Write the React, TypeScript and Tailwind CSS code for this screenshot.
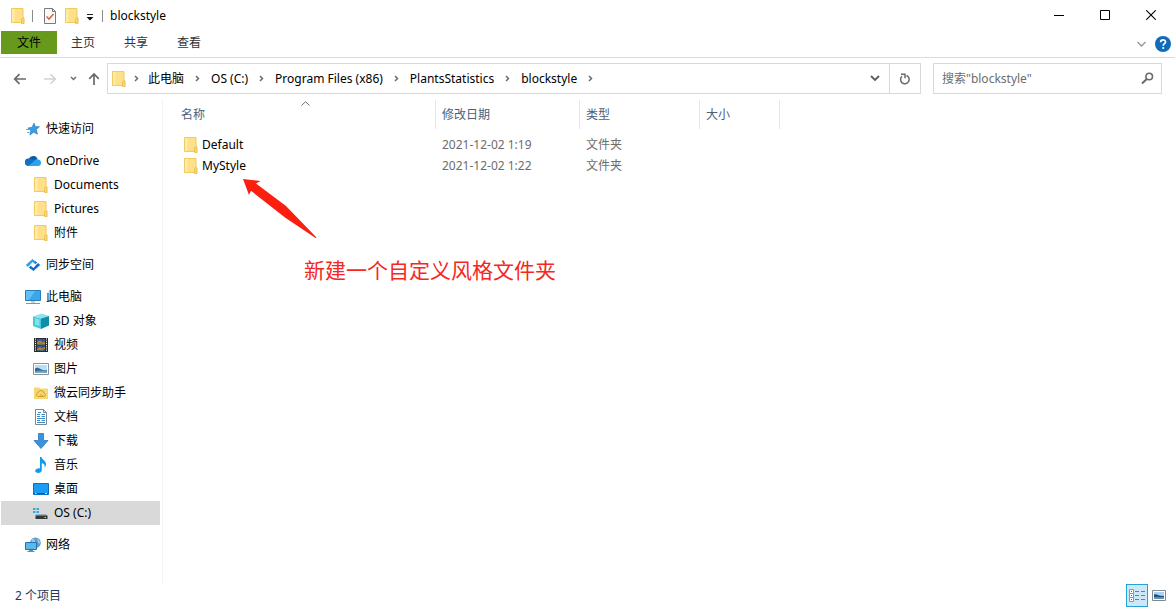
import type { ReactNode } from 'react';

function Folder() {
  return (
    <svg width="14" height="16" viewBox="0 0 14 16" aria-hidden="true">
      <path d="M.5.5h11.500v14H.5z" fill="#fee08a" stroke="#f0cb62" />
      <path d="M1 1h2.500v13H1z" fill="#ffeba6" />
      <path d="M10.500 15.500V11l1.500-1.500h.5l.6.800v5.200z" fill="#fad76c" stroke="#e3b647" strokeWidth=".7" />
    </svg>
  );
}

function Chevron({ d, w, h, color = '#6b6b6b', stroke = 1.5 }: { d: string; w: number; h: number; color?: string; stroke?: number }) {
  return (
    <svg width={w} height={h} viewBox={`0 0 ${w} ${h}`} fill="none" stroke={color} strokeWidth={stroke} aria-hidden="true">
      <path d={d} />
    </svg>
  );
}

function Star() {
  return (
    <svg width="16" height="16" viewBox="0 0 16 16" aria-hidden="true">
      <path d="M9 2l1.300 3.600 4.200.1-3.200 2.800 1.200 4.700-3.900-2-3.700 3 .9-4.600L2.800 7.100l4.300-.9z" fill="#3a9be0" stroke="#2079c0" strokeWidth=".6" />
      <path d="M1 8.500h3M2 11.500h2.500" stroke="#5aaee8" />
    </svg>
  );
}

function Cloud() {
  return (
    <svg width="16" height="16" viewBox="0 0 16 16" aria-hidden="true">
      <path d="M4 5.500A4.600 4.600 0 0 1 12.600 6.500L8 10 3 12.500a3.500 3.500 0 0 1 1-7z" fill="#0a5ca8" />
      <path d="M3.600 5.900c2-.3 3.300.5 8.400 3.800L3.400 12.900a3.500 3.500 0 0 1 .2-7z" fill="#1173c8" />
      <path d="M9 8c1-1.500 2.300-1.800 3.600-1.600A3.300 3.300 0 0 1 12.800 13H3.300c1.800-1.500 3.400-3 5.700-5z" fill="#2aa4ea" />
    </svg>
  );
}

function Sync() {
  return (
    <svg width="16" height="16" viewBox="0 0 16 16" aria-hidden="true">
      <path d="M7.500 2L12 5.500 10 7 7.500 5 5 8l-2 2L.800 8z" fill="#2fa3f2" />
      <path d="M8.500 14L4 10.500 6 9l2.500 2L11 8l2-2 2.200 2z" fill="#0c6fd1" />
      <path d="M10.500 4.200L12 5.500 10 7M5.500 11.800L4 10.500 6 9" fill="#0c5eb8" />
    </svg>
  );
}

function Monitor() {
  return (
    <svg width="16" height="16" viewBox="0 0 16 16" aria-hidden="true">
      <path d="M.5 1.500h15v10H.5z" fill="#38a8ee" stroke="#2c7db5" />
      <path d="M1 2h9L4 11H1z" fill="#62c0f7" />
      <path d="M6 12h4v2H6z" fill="#c3d0d8" />
      <path d="M1 14.500h14" stroke="#8496a1" />
    </svg>
  );
}

function Cube() {
  return (
    <svg width="16" height="16" viewBox="0 0 16 16" aria-hidden="true">
      <path d="M0 3.500L8.500.500 16 3 8 5.500z" fill="#8fe4ec" />
      <path d="M0 3.500l8 2V16l-8-3z" fill="#48c9da" />
      <path d="M8 5.500L16 3v9.500L8 16z" fill="#0f8fa8" />
      <path d="M2 5.200l4.500 1.300v6.500L2 11.500z" fill="#7fe3ec" />
    </svg>
  );
}

function Film() {
  return (
    <svg width="16" height="16" viewBox="0 0 16 16" aria-hidden="true">
      <path d="M1 1h14v14H1z" fill="#2b2b2d" />
      <path d="M4 2h8v5.500H4z" fill="#3458a8" />
      <path d="M4 8.500h8V14H4z" fill="#34559b" />
      <path d="M4 5l3-1.500 3 2 2-1v3H4zM4 12l3-2 2 1.500 3-1.500v2l-4 1H4z" fill="#b8832f" />
      <path d="M6 5.500h3v2H6zM7 12h3v1.500H7z" fill="#5c9a3b" />
      <path d="M2.500 1.500v13M13.500 1.500v13" stroke="#f2f2f2" strokeDasharray="1.200 1" />
    </svg>
  );
}

function Picture() {
  return (
    <svg width="16" height="16" viewBox="0 0 16 16" aria-hidden="true">
      <path d="M.5 2.500h15v11H.5z" fill="#fff" stroke="#8a9399" />
      <path d="M2 4h12v8H2z" fill="#b9def3" />
      <path d="M2 7.500c2-1.500 4-.5 6 .8s4 1.200 6 1V12H2z" fill="#35699a" />
      <path d="M2 10.500c4-1.200 8-.8 12 0V12H2z" fill="#79a9b8" />
    </svg>
  );
}

function CloudFolder() {
  return (
    <svg width="16" height="16" viewBox="0 0 16 16" aria-hidden="true">
      <path d="M1 2.500h5l1.500 1H15v10.500H1z" fill="#f6d873" />
      <path d="M4.700 11.500a1.800 1.800 0 0 1 .2-3.500 3.100 3.100 0 0 1 6.100.2 1.700 1.700 0 0 1 .2 3.300zM6.500 11.300L8.300 9.300l1.800 2" fill="none" stroke="#d3a12b" />
    </svg>
  );
}

function Doc() {
  return (
    <svg width="16" height="16" viewBox="0 0 16 16" aria-hidden="true">
      <path d="M2.500.5h8l3 3v12h-11z" fill="#fff" stroke="#7d878e" />
      <path d="M10.500.5v3h3" fill="none" stroke="#7d878e" />
      <path d="M4 5.500h3M8.500 5.500H12M4 7.500h3M8.500 7.500H12M4 9.500h8M4 11.500h3M8.500 11.500H12M4 13.500h8M5 3.500h3" stroke="#3b8bc9" />
    </svg>
  );
}

function Download() {
  return (
    <svg width="16" height="16" viewBox="0 0 16 16" aria-hidden="true">
      <path d="M5.500.5h5v7h4.500L8 15.500 1 7.500h4.500z" fill="#3a92dd" stroke="#2a78c0" strokeWidth=".8" />
    </svg>
  );
}

function Music() {
  return (
    <svg width="16" height="16" viewBox="0 0 16 16" aria-hidden="true">
      <path d="M7 0h1.500c.3 2.500 4.500 3.500 4.500 7.200 0 1.500-.8 2.800-1.500 3.500.8-2.700-.6-4-2.700-4.700V13c0 1.700-1.600 3-3.500 3S2 15 2.200 13.600C2.500 12 4.800 10.900 7 11.400z" fill="#109bee" />
    </svg>
  );
}

function Desktop() {
  return (
    <svg width="16" height="16" viewBox="0 0 16 16" aria-hidden="true">
      <path d="M.5 2.500h15v11H.5z" fill="#1a9cf4" stroke="#0b6fc2" />
      <path d="M1 12.500h14" stroke="#0d5c9e" />
      <path d="M2 12.500h1.500M12 12.500h2" stroke="#c5e5fb" />
    </svg>
  );
}

function Drive() {
  return (
    <svg width="16" height="16" viewBox="0 0 16 16" aria-hidden="true">
      <path d="M0 3h2.500v2H0zM3.500 3H6v2H3.500zM0 6h2.500v2H0zM3.500 6H6v2H3.500z" fill="#22b1ea" />
      <path d="M3 9h10l1.500 2h-12z" fill="#a8adaf" />
      <path d="M2.500 10.500h12V14h-12z" fill="#33383a" />
      <path d="M11.500 12h1.500v1h-1.500z" fill="#8ff08a" />
    </svg>
  );
}

function Network() {
  return (
    <svg width="16" height="16" viewBox="0 0 16 16" aria-hidden="true">
      <circle cx="10.500" cy="5.800" r="5.300" fill="#5d9cc9" />
      <path d="M7 2.500c2-1 3 0 3 1.500S8 6 6.500 5.500M12 1.500c2 1 3.500 3 3 5.500l-2-1.500z" fill="#9cc9e4" />
      <path d="M.5 5.500h11v7H.5z" fill="#58b9ef" stroke="#2573ac" />
      <path d="M4 13h4v1H4zM2.500 15h7v-1h-7z" fill="#6d8da3" />
    </svg>
  );
}

type Item = { label: string; icon: ReactNode; child?: boolean; active?: boolean };

const groups: Item[][] = [
  [{ label: '快速访问', icon: <Star /> }],
  [
    { label: 'OneDrive', icon: <Cloud /> },
    { label: 'Documents', icon: <Folder />, child: true },
    { label: 'Pictures', icon: <Folder />, child: true },
    { label: '附件', icon: <Folder />, child: true },
  ],
  [{ label: '同步空间', icon: <Sync /> }],
  [
    { label: '此电脑', icon: <Monitor /> },
    { label: '3D 对象', icon: <Cube />, child: true },
    { label: '视频', icon: <Film />, child: true },
    { label: '图片', icon: <Picture />, child: true },
    { label: '微云同步助手', icon: <CloudFolder />, child: true },
    { label: '文档', icon: <Doc />, child: true },
    { label: '下载', icon: <Download />, child: true },
    { label: '音乐', icon: <Music />, child: true },
    { label: '桌面', icon: <Desktop />, child: true },
    { label: 'OS (C:)', icon: <Drive />, child: true, active: true },
  ],
  [{ label: '网络', icon: <Network /> }],
];

const crumbs = ['此电脑', 'OS (C:)', 'Program Files (x86)', 'PlantsStatistics', 'blockstyle'];

const files = [
  { name: 'Default', date: '2021-12-02 1:19', type: '文件夹' },
  { name: 'MyStyle', date: '2021-12-02 1:22', type: '文件夹' },
];

function TitleBar() {
  return (
    <header className="flex h-[31px] items-center justify-between pr-px">
      <div className="flex items-center pl-[11px]">
        <Folder />
        <span className="mr-[10px] ml-[7px] h-3 w-px bg-[#8a8a8a]" />
        <button type="button" aria-label="属性">
          <svg width="14" height="16" viewBox="0 0 14 16">
            <path d="M1.500.5h8l3 3v12h-11z" fill="#fafafa" stroke="#77797c" />
            <path d="M9.500.5v3h3" fill="none" stroke="#77797c" />
            <path d="M3.500 8.500l2.500 2.500 4.500-5" fill="none" stroke="#e0632f" strokeWidth="1.600" />
          </svg>
        </button>
        <button type="button" aria-label="新建文件夹" className="ml-2">
          <Folder />
        </button>
        <button type="button" aria-label="自定义快速访问工具栏" className="ml-[7px]">
          <svg width="8" height="16" viewBox="0 0 8 16">
            <path d="M1 6.500h6" stroke="#222" />
            <path d="M.500 9h7L4 12.500z" fill="#111" />
          </svg>
        </button>
        <span className="mr-[7px] ml-2 h-3 w-px bg-[#8a8a8a]" />
        <h1>blockstyle</h1>
      </div>
      <div className="flex h-[30px] self-start">
        <button type="button" aria-label="最小化" className="grid w-[46px] place-items-center">
          <Chevron d="M0 5.500h10" w={10} h={10} color="#000" stroke={1} />
        </button>
        <button type="button" aria-label="最大化" className="grid w-[46px] place-items-center">
          <Chevron d="M.5.5h9v9h-9z" w={10} h={10} color="#000" stroke={1} />
        </button>
        <button type="button" aria-label="关闭" className="grid w-[46px] place-items-center">
          <Chevron d="M.3.300l9.400 9.400M9.700.300L.3 9.700" w={10} h={10} color="#000" stroke={1.1} />
        </button>
      </div>
    </header>
  );
}

function Ribbon() {
  return (
    <div className="flex h-[27px] items-start justify-between border-b border-[#dadbdc] pl-px">
      <div className="flex">
        <button type="button" className="h-[23px] bg-[#679a1c] px-4 pt-px">文件</button>
        {['主页', '共享', '查看'].map((tab) => (
          <button type="button" key={tab} className="mr-px h-[23px] px-[14px] pt-px text-[#333]">
            {tab}
          </button>
        ))}
      </div>
      <div className="flex h-[26px] items-center gap-[9px] pr-1">
        <button type="button" aria-label="展开功能区">
          <Chevron d="M.5 1l4 4 4-4" w={9} h={6} color="#9a9a9a" />
        </button>
        <button type="button" aria-label="帮助">
          <svg width="16" height="16" viewBox="0 0 16 16">
            <circle cx="8" cy="8" r="8" fill="#0f6cbd" />
            <path d="M5.600 6.200c0-3.200 4.900-3.100 4.900-.2 0 1.700-2.300 1.700-2.300 3.700" fill="none" stroke="#fff" strokeWidth="1.700" />
            <circle cx="8.200" cy="12" r="1.100" fill="#fff" />
          </svg>
        </button>
      </div>
    </div>
  );
}

function AddressRow() {
  return (
    <div className="flex h-[41px] items-center px-[13px]">
      <div className="flex items-center">
        <button type="button" aria-label="后退">
          <Chevron d="M13 7H2M6.500 2.200L1.700 7l4.800 4.800" w={14} h={14} color="#6a6a6a" stroke={1.7} />
        </button>
        <button type="button" aria-label="前进" className="ml-4">
          <Chevron d="M1 7h11M7.500 2.200L12.300 7l-4.800 4.800" w={14} h={14} color="#d2d2d2" stroke={1.6} />
        </button>
        <button type="button" aria-label="最近浏览的位置" className="ml-[13px]">
          <Chevron d="M1 1l2.500 2.500L6 1" w={7} h={5} />
        </button>
        <button type="button" aria-label="上移" className="ml-[10px]">
          <Chevron d="M7 13V2M2.200 6.800L7 2l4.800 4.800" w={14} h={14} color="#6a6a6a" stroke={1.7} />
        </button>
      </div>
      <div className="ml-[6px] flex h-[31px] flex-1 items-center border border-[#d9d9d9] pl-1">
        <Folder />
        <nav aria-label="地址" className="flex flex-1 items-center">
          <span className="w-[22px] pl-2">
            <Chevron d="M1 1l2.500 2.500L1 6" w={5} h={7} />
          </span>
          {crumbs.map((c) => (
            <span key={c} className="flex items-center">
              <a href="#">{c}</a>
              <span className="grid w-[27px] justify-center">
                <Chevron d="M1 1l2.500 2.500L1 6" w={5} h={7} />
              </span>
            </span>
          ))}
        </nav>
        <button type="button" aria-label="以前的位置" className="grid h-full w-[29px] place-items-center">
          <Chevron d="M1 1l4 4 4-4" w={10} h={7} color="#5c5c5c" stroke={1.8} />
        </button>
        <button type="button" aria-label="刷新" className="grid h-full w-[31px] place-items-center border-l border-[#d9d9d9]">
          <svg width="12" height="12" viewBox="0 0 12 12" fill="none" stroke="#6a6a6a" strokeWidth="1.500">
            <path d="M7.500 2.500A4.300 4.300 0 1 1 3 3.300" />
            <path d="M2 1.200h4v4" />
          </svg>
        </button>
      </div>
      <label className="ml-3 flex h-[31px] w-[229px] items-center border border-[#d9d9d9] pr-[7px] pl-2">
        <input type="search" aria-label="搜索" placeholder={'搜索"blockstyle"'} className="min-w-0 flex-1 outline-none placeholder:text-[#6d6d6d]" />
        <svg width="13" height="13" viewBox="0 0 13 13" fill="none" stroke="#6a6a6a" aria-hidden="true">
          <circle cx="8.200" cy="4.500" r="3.300" strokeWidth="1.600" />
          <path d="M5.800 7L1 11.500" strokeWidth="1.900" />
        </svg>
      </label>
    </div>
  );
}

function Sidebar() {
  return (
    <nav aria-label="导航窗格" className="flex w-[163px] shrink-0 flex-col gap-2 border-r border-[#f3f3f3] pt-[18px] pr-[2px] pl-px">
      {groups.map((g) => (
        <ul key={g[0].label}>
          {g.map((it) => (
            <li key={it.label}>
              <a
                href="#"
                className={`flex h-6 items-center gap-[5px] ${it.child ? 'pl-8' : 'pl-6'} ${it.active ? 'bg-[#d9d9d9]' : ''}`}
              >
                <span className="grid w-4 place-items-center">{it.icon}</span>
                {it.label}
              </a>
            </li>
          ))}
        </ul>
      ))}
    </nav>
  );
}

function FileList() {
  const head = 'border-r border-[#e5e5e5] pl-[6px] text-left font-normal';
  return (
    <main className="relative flex-1 pt-px pl-2">
      <table className="w-[609px] table-fixed border-separate border-spacing-0">
        <colgroup>
          <col className="w-[265px]" />
          <col className="w-[144px]" />
          <col className="w-[120px]" />
          <col className="w-[80px]" />
        </colgroup>
        <thead className="text-[#4c607a]">
          <tr className="h-[29px]">
            <th className="relative border-r border-[#e5e5e5] pl-[10px] text-left font-normal" aria-sort="ascending">
              名称
              <span className="absolute top-px left-[130px]">
                <Chevron d="M.5 4.500L4.500.700l4 3.800" w={9} h={5} stroke={1} />
              </span>
            </th>
            <th className={head}>修改日期</th>
            <th className={head}>类型</th>
            <th className={head}>大小</th>
          </tr>
        </thead>
        <tbody className="text-[#6d6d6d]">
          <tr className="h-[5px]" aria-hidden="true" />
          {files.map((f) => (
            <tr key={f.name} className="h-[21px]">
              <td className="p-0 pl-[13px] text-black">
                <a href="#" className="flex items-center gap-1">
                  <Folder />
                  {f.name}
                </a>
              </td>
              <td className="p-0 pl-[6px]">{f.date}</td>
              <td className="p-0 pl-[6px]">{f.type}</td>
              <td className="p-0" />
            </tr>
          ))}
        </tbody>
      </table>
      <svg className="absolute top-[79px] left-[79px]" width="76" height="62" viewBox="0 0 76 62" aria-hidden="true">
        <path d="M1 1l17.500 2-4.500 2.500 30 22.500 30.500 31.500-1 .5-30.500-20.500L9 12.800 7 17z" fill="#fb1f10" />
      </svg>
      <p className="absolute top-[157px] left-[141px] text-[21px] leading-7 whitespace-nowrap text-[#f5281f]">新建一个自定义风格文件夹</p>
    </main>
  );
}

function StatusBar() {
  return (
    <footer className="flex h-[25px] items-center justify-between pr-[9px] pl-[15px] text-[#1e395b]">
      <span>2 个项目</span>
      <div className="flex items-center gap-1">
        <button type="button" aria-label="详细信息" className="grid h-[23px] w-[22px] place-items-center border border-[#26a0da] bg-[#cce8f6]">
          <svg width="16" height="13" viewBox="0 0 16 13" fill="none">
            <path d="M.5.5h4v4h-4zM.5 4.500h4v4h-4zM.5 8.500h4v4h-4z" fill="#fff" stroke="#8b979e" />
            <path d="M2 2.500h1M2 6.500h1M2 10.500h1" stroke="#2f6f9c" />
            <path d="M6 2.500h4M12 2.500h4M6 6.500h4M12 6.500h4M6 10.500h4M12 10.500h4" stroke="#6f7f88" />
          </svg>
        </button>
        <button type="button" aria-label="大缩略图">
          <svg width="14" height="12" viewBox="0 0 14 12">
            <path d="M.5.5h13v10H.5z" fill="#fff" stroke="#80898f" />
            <path d="M2 2h10v7H2z" fill="#a9d3f0" />
            <path d="M2 4.500c3-1 5 2 10 1.500v1.500H2z" fill="#1f4f86" />
            <path d="M2 7.500h10V9H2z" fill="#5f93b8" />
          </svg>
        </button>
      </div>
    </footer>
  );
}

export default function App() {
  return (
    <div
      lang="zh-CN"
      className="flex min-h-screen flex-col bg-white font-['Noto_Sans','Noto_Sans_CJK_SC',sans-serif] text-[12px] leading-4 text-black"
    >
      <TitleBar />
      <Ribbon />
      <AddressRow />
      <div className="flex flex-1">
        <Sidebar />
        <FileList />
      </div>
      <StatusBar />
    </div>
  );
}
